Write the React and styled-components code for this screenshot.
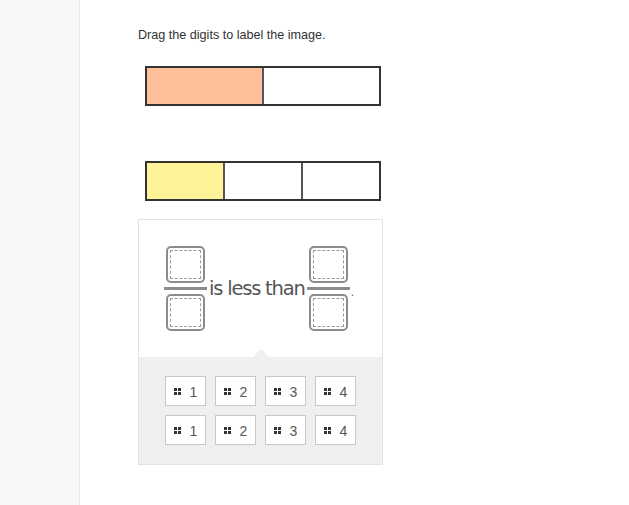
import React from "react";
import styled, { createGlobalStyle } from "styled-components";

const GlobalStyle = createGlobalStyle`
  html, body { margin: 0; padding: 0; background: #fff; }
  body { font-family: "Liberation Sans", Arial, sans-serif; }
`;

const Page = styled.div`
  display: flex; width: 629px; height: 505px; overflow: hidden;
`;
const Sidebar = styled.div`
  width: 79px; flex-shrink: 0;
  background: #f8f7f5; border-right: 1px solid #e9e7e4;
`;
const Main = styled.div`
  padding: 28px 0 0 58px;
  display: flex; flex-direction: column;
`;
const Prompt = styled.p`
  margin: 0; font-size: 12.6px; line-height: 15px; color: #333;
`;
const Bar = styled.div`
  display: flex; width: 232px; height: 36px;
  margin: ${(p) => p.$top}px 0 0 7px;
  border: 2px solid #333;
`;
const Part = styled.div`
  flex: 1;
  background: ${(p) => p.$fill || "#fff"};
  & + & { border-left: 2px solid #555; }
`;
const Panel = styled.div`
  margin-top: 18px; width: 243px;
  border: 1px solid #e2e2e2;
`;
const Expression = styled.div`
  height: 137px; display: flex; align-items: center; justify-content: center;
  padding-right: 3px;
`;
const Fraction = styled.div`
  display: flex; flex-direction: column; align-items: center; gap: 4px;
`;
const Slot = styled.div`
  width: 31px; height: 29px; border: 2px solid #8c8c8c; border-radius: 5px;
  padding: 2px; box-sizing: content-box;
  &::after {
    content: ""; display: block; width: 100%; height: 100%;
    box-sizing: border-box; border: 1px dashed #9a9a9a;
  }
`;
const Line = styled.div`
  width: 43px; height: 3px; background: #8c8c8c;
`;
const Words = styled.span`
  font-family: "DejaVu Sans", sans-serif; font-size: 19.5px; color: #555;
  letter-spacing: -1.2px; margin: 0 2px;
`;
const Dot = styled.span`
  font-size: 12px; color: #555; margin: 6px 0 0 1px;
`;
const Tray = styled.div`
  position: relative; background: #efefef; height: 107px;
  padding-top: 19px; box-sizing: border-box;
  display: grid; grid-template-columns: repeat(4, 41px);
  column-gap: 9px; row-gap: 9px; justify-content: center; align-content: start;
  &::before {
    content: ""; position: absolute; left: 114px; top: -8px;
    border-left: 8px solid transparent; border-right: 8px solid transparent;
    border-bottom: 8px solid #efefef;
  }
`;
const Tile = styled.div`
  height: 30px; box-sizing: border-box; background: #fff;
  border: 1px solid #c8c8c8;
  display: flex; align-items: center; justify-content: center; gap: 9px;
  font-size: 14px; color: #555; padding-top: 1px;
`;
const Grip = styled.span`
  display: grid; grid-template-columns: repeat(2, 3px); gap: 1px;
  & > i { width: 3px; height: 3px; background: #333; }
`;

const digits = [1, 2, 3, 4];

const App = () => (
  <Page>
    <GlobalStyle />
    <Sidebar />
    <Main>
      <Prompt>Drag the digits to label the image.</Prompt>
      <Bar $top={23}>
        <Part $fill="#ffbf9b" />
        <Part />
      </Bar>
      <Bar $top={55}>
        <Part $fill="#fff39a" />
        <Part />
        <Part />
      </Bar>
      <Panel>
        <Expression>
          <Fraction>
            <Slot />
            <Line />
            <Slot />
          </Fraction>
          <Words>is less than</Words>
          <Fraction>
            <Slot />
            <Line />
            <Slot />
          </Fraction>
          <Dot>.</Dot>
        </Expression>
        <Tray>
          {[...digits, ...digits].map((d, i) => (
            <Tile key={i}>
              <Grip><i /><i /><i /><i /></Grip>
              {d}
            </Tile>
          ))}
        </Tray>
      </Panel>
    </Main>
  </Page>
);

export default App;
